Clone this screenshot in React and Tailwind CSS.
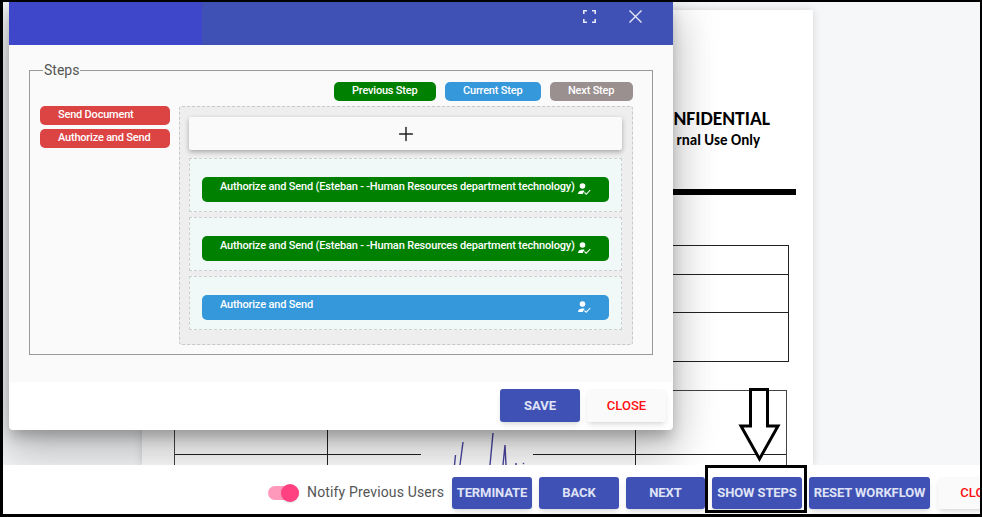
import { Plus } from "lucide-react";

const sans = "font-['Roboto','Liberation_Sans',sans-serif]";

function Step({ color, title }) {
  return (
    <div className="h-[54px] border border-dashed border-[#cfcfcf] bg-[#f0f9f8] px-3 pt-[18px]">
      <div className={`w-full h-[25px] rounded-[5px] ${color} flex justify-between pl-[18px] pr-[18px] text-white text-[11px] font-medium tracking-[-0.17px] leading-[20px] whitespace-nowrap`}>
        <span>{title}</span>
        <svg viewBox="0 0 14 14" className="w-[14px] h-[14px] mt-[5px] shrink-0 fill-white stroke-white" aria-hidden="true">
          <circle cx="5.500" cy="4" r="2.800" stroke="none" />
          <path d="M1 12c0-2.500 2.200-3.600 4.500-3.600.8 0 1.500.1 2.100.4L5.600 12z" stroke="none" />
          <path d="M7.500 10.500l1.800 1.800 3.900-4.300" fill="none" strokeWidth="1.100" />
        </svg>
      </div>
    </div>
  );
}

function Legend({ color, width, children }) {
  return (
    <div className={`h-[19px] ${width} ${color} rounded-[5px] pl-[18px] text-white text-[11px] font-medium tracking-[-0.2px] leading-[17px] whitespace-nowrap`}>
      {children}
    </div>
  );
}

function BarButton({ width, children }) {
  return (
    <button className={`${width} h-[32px] shrink-0 rounded-[3px] bg-[#3f51b5] text-[#dfe3f5] text-[13px] font-bold tracking-[-0.1px] shadow-md whitespace-nowrap`}>
      {children}
    </button>
  );
}

function Document() {
  return (
    <div className="h-[455px] w-[671px] ml-[142px] mt-[8px] bg-white shadow-[0_0_8px_rgba(0,0,0,0.15)] overflow-hidden font-['Carlito','Open_Sans','Liberation_Sans',sans-serif] text-black">
      <div className="h-[97px]" />
      <div className="flex flex-col items-end pr-[43px]">
        <div className="text-[19.500px] font-bold leading-[22px]">NFIDENTIAL</div>
      </div>
      <div className="flex flex-col items-end pr-[53px]">
        <div className="text-[15px] font-bold leading-[22px]">rnal Use Only</div>
      </div>
      <div className="h-[6px] mt-[38px] ml-[32px] mr-[17px] bg-black" />
      <div className="mt-[50px] ml-[32px] mr-[24px] border border-[#222]">
        <div className="h-[29px] border-b border-[#222]" />
        <div className="h-[38px] border-b border-[#222]" />
        <div className="h-[48px]" />
      </div>
      <div className="mt-[28px] ml-[32px] mr-[26px] border-x border-t border-[#444]">
        <div className="grid grid-cols-[153px_308px_1fr] h-[64px] border-b border-[#222]">
          <div className="border-r border-[#222]" />
          <div className="border-r border-[#222]" />
          <div />
        </div>
        <div className="grid grid-cols-[153px_308px_1fr] h-[20px]">
          <div className="border-r border-[#222]" />
          <div className="border-r border-[#222]" />
          <div />
        </div>
      </div>
    </div>
  );
}

export default function App() {
  return (
    <div className={`relative w-[982px] h-[517px] overflow-hidden bg-[#f6f7f9] ${sans}`}>
      <div className="pt-[2px]">
        <Document />
      </div>

      {/* signature scribble over the table */}
      <div className="absolute left-[421px] top-[432px] w-[112px] h-[33px] bg-white">
        <svg viewBox="0 0 112 33" className="w-full h-full stroke-[#4a45a0] stroke-[1.4] fill-none" aria-hidden="true">
          <path d="M33.500 33 L34.500 23" />
          <path d="M39 33 L42 10" />
          <path d="M69 33 L72 1" />
          <path d="M82 33 L84 13 L85 33" />
          <path d="M94 32 L96 32 M102 32 L103 31" />
        </svg>
      </div>

      {/* modal */}
      <div className="absolute left-[9px] top-[2px] w-[664px] h-[428px] bg-white rounded-b-[4px] shadow-[0_8px_14px_-2px_rgba(0,0,0,0.25),0_24px_38px_3px_rgba(0,0,0,0.14),0_9px_46px_8px_rgba(0,0,0,0.12)] flex flex-col">
        <div className="h-[43px] shrink-0 bg-[#3f51b5] flex items-start">
          <div className="w-[193px] h-full bg-[#3e47c9]" />
          <div className="flex-1 flex justify-end items-center gap-[33px] pr-[31px] pt-[8px] text-[#e4e7f6]">
            <svg viewBox="0 0 13 13" className="w-[13px] h-[13px] fill-none stroke-current stroke-[1.6]" aria-hidden="true">
              <path d="M.8 4V.8H4M9 .8h3.200V4M12.200 9v3.200H9M4 12.200H.8V9" />
            </svg>
            <svg viewBox="0 0 13 13" className="w-[13px] h-[13px] fill-none stroke-current stroke-[1.4]" aria-hidden="true">
              <path d="M.5.5l12 12M12.500.5l-12 12" />
            </svg>
          </div>
        </div>

        <div className="h-[337px] bg-[#fafafa] px-[20px] pt-[19px]">
          <fieldset className="relative h-[291px] border border-[#999] px-[10px] min-w-0">
            <legend className="ml-[3px] px-[1px] text-[14px] leading-[13px] text-[#555]">Steps</legend>
            <div className="flex justify-end gap-[9px] pr-[9px] mt-[5px]">
              <Legend color="bg-[#008000]" width="w-[102px]">Previous Step</Legend>
              <Legend color="bg-[#3498db]" width="w-[96px]">Current Step</Legend>
              <Legend color="bg-[#9b9090]" width="w-[83px]">Next Step</Legend>
            </div>
            <div className="flex gap-[9px] mt-[5px]">
              <div className="w-[130px] flex flex-col gap-[4px]">
                <Legend color="bg-[#dc4444]" width="w-[130px]">Send Document</Legend>
                <Legend color="bg-[#dc4444]" width="w-[130px]">Authorize and Send</Legend>
              </div>
              <div className="w-[454px] h-[239px] border border-dashed border-[#c8c8c8] rounded-[3px] bg-[#eeeeee] pl-[9px] pr-[10px] pt-[10px]">
                <div className="h-[33px] rounded-[2px] bg-[#fafafa] shadow-[0_2px_5px_rgba(0,0,0,0.3)] flex items-center justify-center text-[#222]">
                  <Plus size={22} strokeWidth={1.6} />
                </div>
                <div className="flex flex-col gap-[5px] mt-[8px]">
                  <Step color="bg-[#008000]" title="Authorize and Send (Esteban - -Human Resources department technology)" />
                  <Step color="bg-[#008000]" title="Authorize and Send (Esteban - -Human Resources department technology)" />
                  <Step color="bg-[#3498db]" title="Authorize and Send" />
                </div>
              </div>
            </div>
          </fieldset>
        </div>

        <div className="flex-1 flex justify-end gap-[7px] pr-[7px] pt-[7px]">
          <button className="w-[80px] h-[33px] rounded-[3px] bg-[#3f51b5] text-[#dfe3f5] text-[13px] font-bold shadow-md">SAVE</button>
          <button className="w-[79px] h-[33px] rounded-[3px] bg-[#fafafa] text-[#ff1010] text-[13px] font-medium shadow-md">CLOSE</button>
        </div>
      </div>

      {/* bottom bar */}
      <div className="absolute left-0 right-0 top-[465px] h-[52px] bg-white flex items-start pt-[12px] pl-[268px] text-[14px]">
        <div className="relative w-[32px] h-[18px] mt-[7px] shrink-0">
          <div className="absolute left-0 top-[2px] w-[31px] h-[14px] rounded-full bg-[#ff99bb]" />
          <div className="absolute left-[13px] top-0 w-[18px] h-[18px] rounded-full bg-[#ff4081] shadow" />
        </div>
        <span className="ml-[7px] w-[137px] shrink-0 text-[#555] tracking-[0.15px] leading-[30px] whitespace-nowrap">Notify Previous Users</span>
        <div className="flex gap-[7px] ml-[8px] shrink-0">
          <BarButton width="w-[80px]">TERMINATE</BarButton>
          <BarButton width="w-[80px]">BACK</BarButton>
          <BarButton width="w-[79px]">NEXT</BarButton>
          <BarButton width="w-[90px]">SHOW STEPS</BarButton>
          <BarButton width="w-[121px]">RESET WORKFLOW</BarButton>
          <button className="ml-[1px] w-[84px] h-[32px] shrink-0 rounded-[3px] bg-[#fafafa] text-[#ff1010] text-[13px] font-medium shadow-md">CLOSE</button>
        </div>
      </div>

      {/* annotation arrow and box on top of the screenshot */}
      <svg viewBox="0 0 60 80" className="absolute left-[730px] top-[386px] w-[60px] h-[80px] fill-white stroke-black stroke-[3]" aria-hidden="true">
        <path d="M20.500 3.500H37.500V40H48L29.500 73L11 40H20.500Z" />
      </svg>
      <div className="absolute left-[705px] top-[465px] w-[102px] h-[48px] border-[3px] border-black" />

      {/* black frame drawn round the screenshot */}
      <div className="absolute inset-0 border-t-[2px] border-l-[3px] border-r-[2px] border-b-[3px] border-black pointer-events-none" />
    </div>
  );
}
